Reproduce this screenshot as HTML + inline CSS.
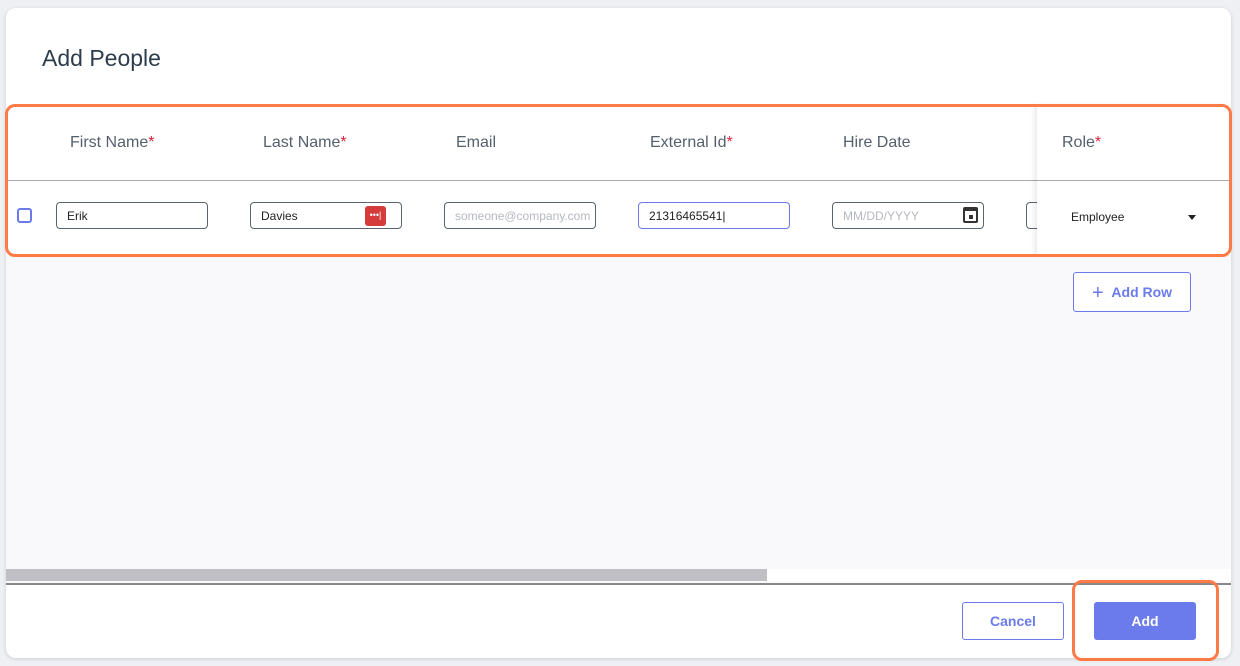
<!DOCTYPE html>
<html><head><style>
*{box-sizing:border-box;margin:0;padding:0}
body{width:1240px;height:666px;overflow:hidden;background:#eef0f4;font-family:"Liberation Sans",sans-serif;position:relative}
.modal{position:absolute;left:6px;top:8px;width:1225px;height:650px;background:#f9f9fb;border-radius:10px;overflow:hidden;box-shadow:0 1px 4px rgba(0,0,0,.15)}
.hdr{position:absolute;left:0;top:0;width:100%;height:97px;background:#fff}
.hdr h1{position:absolute;left:36px;top:37px;font-size:23px;font-weight:normal;color:#2e3d4d}
.tbl{position:absolute;left:0;top:97px;width:100%;height:150px;background:#fff}
.line{position:absolute;left:0;top:75px;width:100%;height:1px;background:#aaa}
.th{position:absolute;top:29px;font-size:16px;color:#55606d}
.th b{color:#e0203c;font-weight:normal}
.in{position:absolute;top:97px;height:27px;width:152px;border:1px solid #5a6470;border-radius:4px;font-size:12px;padding:6px 10px;color:#222}
.role{position:absolute;left:1031px;top:0;width:194px;height:150px;background:#fff;box-shadow:-3px 0 4px rgba(0,0,0,.08)}
.orange{position:absolute;border:3px solid #ff7a45;border-radius:10px}
.sb{position:absolute;left:0;top:561px;width:100%;height:12px;background:#fff}
.foot{position:absolute;left:0;top:575px;width:100%;height:75px;background:#fff;border-top:2px solid #888}
.btn{position:absolute;border-radius:3px;font-size:14px;font-weight:bold;text-align:center}
</style></head><body>
<div class="modal">
<div class="hdr"><h1>Add People</h1></div>
<div class="tbl">
<div class="th" style="left:64px">First Name<b>*</b></div>
<div class="th" style="left:257px">Last Name<b>*</b></div>
<div class="th" style="left:450px">Email</div>
<div class="th" style="left:644px">External Id<b>*</b></div>
<div class="th" style="left:837px">Hire Date</div>
<div class="line"></div>
<div style="position:absolute;left:11px;top:103px;width:15px;height:15px;border:2px solid #6b7bec;border-radius:3px"></div>
<div class="in" style="left:50px">Erik</div>
<div class="in" style="left:244px">Davies<span style="position:absolute;right:15px;top:3px;width:21px;height:20px;background:#d63b3b;border-radius:3px;color:#fff;font-size:9px;line-height:19px;text-align:center">•••|</span></div>
<div class="in" style="left:438px;color:#b4b8be">someone@company.com</div>
<div class="in" style="left:632px;border-color:#6b7bec">21316465541|</div>
<div class="in" style="left:826px;color:#b4b8be">MM/DD/YYYY<span style="position:absolute;right:5px;top:4px;width:15px;height:16px;background:#333;border-radius:2px"><span style="position:absolute;left:2px;top:4px;width:11px;height:10px;background:#fff"></span><span style="position:absolute;left:6px;top:8px;width:4px;height:4px;background:#333"></span></span></div>
<div class="in" style="left:1020px"></div>
<div class="role">
<div class="th" style="left:25px">Role<b>*</b></div>
<div class="line"></div>
<div style="position:absolute;left:34px;top:105px;font-size:12px;color:#222">Employee</div>
<div style="position:absolute;left:151px;top:110px;border:4px solid transparent;border-top:5px solid #222"></div>
</div>
</div>
<div class="btn" style="left:1067px;top:264px;width:118px;height:40px;border:1px solid #6b7bec;color:#6b7bec;background:#fff;line-height:38px;font-weight:bold"><span style="font-weight:normal;font-size:20px;vertical-align:-2px">+</span>&nbsp;&nbsp;Add Row</div>
<div class="sb"><div style="width:761px;height:12px;background:#bfbfc4"></div></div>
<div class="foot"></div>
<div class="btn" style="left:956px;top:594px;width:102px;height:38px;border:1px solid #6b7bec;color:#6b7bec;background:#fff;line-height:36px">Cancel</div>
<div class="btn" style="left:1088px;top:594px;width:102px;height:38px;background:#6b7bec;color:#fff;line-height:38px">Add</div>
</div>
<div class="orange" style="left:5px;top:104px;width:1227px;height:153px"></div>
<div class="orange" style="left:1072px;top:580px;width:147px;height:81px"></div>
</body></html>
